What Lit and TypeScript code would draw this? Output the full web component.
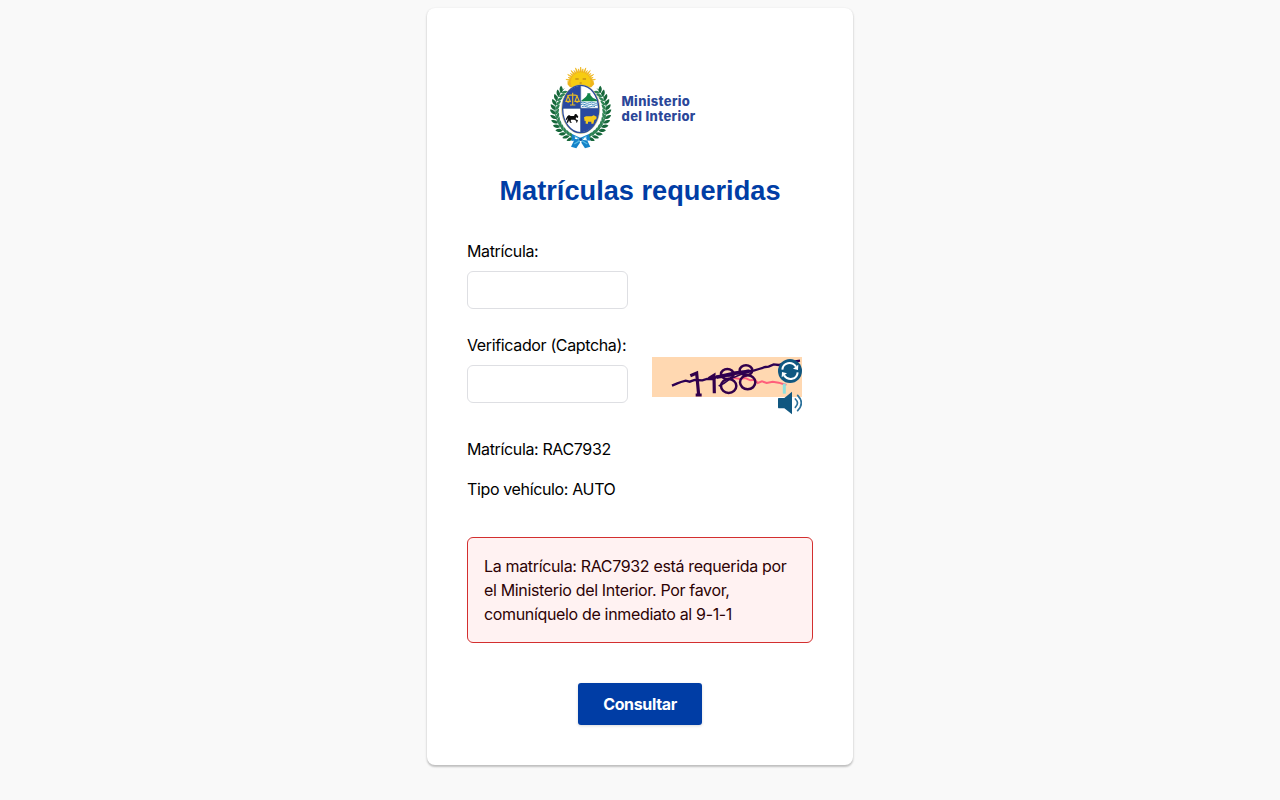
import { LitElement, html, svg, css } from "lit";
import { customElement } from "lit/decorators.js";

@customElement("ministry-crest")
class MinistryCrest extends LitElement {
  static styles = css`
    :host { display: block; width: 80px; height: 95px; }
    svg { display: block; }
  `;

  private side(flip: boolean) {
    const leaves = Array.from({ length: 13 }, (_, i) => {
      const deg = 48 + i * 9.4;
      const r = (deg * Math.PI) / 180;
      return { x: 122 - 76 * Math.sin(r), y: 153 - 84 * Math.cos(r), turn: 90 - deg };
    });
    return svg`<g transform=${flip ? "translate(244 0) scale(-1 1)" : ""}>
      <path d="M102 232C70 218 46 190 45 149C45 121 56 101 72 86" fill="none" stroke="#2d7d55" stroke-width="3"/>
      ${leaves.map((p) => svg`<g transform="translate(${p.x} ${p.y}) rotate(${p.turn})">
          <path d="M0 3C-11 2 -15 -6 -15 -13C-6 -12 1 -7 0 3" fill="#17683b"/>
          <path d="M0 3C9 2 12 -7 12 -14C4 -12 -1 -6 0 3" fill="#2e8354"/>
        </g>`)}
    </g>`;
  }

  render() {
    const rays = Array.from({ length: 19 }, (_, i) => {
      const a = 180 + i * 10;
      const r = (a * Math.PI) / 180;
      const s = ((a - 6) * Math.PI) / 180;
      const e = ((a + 6) * Math.PI) / 180;
      const len = i % 2 ? 45 : 40;
      return `M${122 + 27 * Math.cos(s)} ${66 + 27 * Math.sin(s)}L${122 + len * Math.cos(r)} ${66 + len * Math.sin(r)}L${122 + 27 * Math.cos(e)} ${66 + 27 * Math.sin(e)}Z`;
    }).join("");
    return html`<svg width="80" height="95" viewBox="0 0 240 285" role="img" aria-label="Escudo">
      <path d=${rays} fill="#efb51a" stroke="#efb51a" stroke-width="2"/>
      <path d="M82 72L92 52H152L163 72L154 82H90Z" fill="#efb51a"/>
      <ellipse cx="122" cy="66" rx="30" ry="29" fill="#f7cc10"/>
      <path d="M106 57h10M128 57h10M119 69h6" stroke="#ad7616" stroke-width="3"/>
      ${this.side(false)}${this.side(true)}
      <path d="M96 222L121 233L147 222L151 242L124 239L94 243ZM104 238L117 236L120 248L109 265L93 260ZM140 238L127 236L124 248L135 265L151 260Z" fill="#1583c9"/>
      <path d="M104 229L142 252M140 229L103 252" stroke="#54b8e4" stroke-width="4"/>
      <path d="M105 234L112 236M132 236L139 234" stroke="#fff" stroke-width="4"/>
      <circle cx="122" cy="238" r="5" fill="#19579e"/>
      <ellipse cx="122" cy="147" rx="57" ry="73" fill="#fff" stroke="#c8b04b" stroke-width="2"/>
      <clipPath id="oval"><ellipse cx="122" cy="147" rx="54" ry="70"/></clipPath>
      <g clip-path="url(#oval)">
        <path d="M65 70H122V145H65ZM122 145H180V220H122Z" fill="#2948a0"/>
        <path d="M122 145H180V70H122Z" fill="#fff"/>
        <path d="M122 124L129 118L138 110L142 104V100h9v5L159 114L168 118L174 124Z" fill="#128448"/>
        <path d="M122 128q7-4 13 0t13 0t13 0t15 0M122 134q7-4 13 0t13 0t13 0t15 0M126 140q7-4 13 0t13 0t13 0" fill="none" stroke="#448dc0" stroke-width="3"/>
      </g>
      <ellipse cx="122" cy="147" rx="54" ry="71" fill="none" stroke="#2c4d9c" stroke-width="4"/>
      <path d="M122 77V217M69 145H175" stroke="#1e478c" stroke-width="2"/>
      <path d="M98 98V134M82 108Q98 101 114 108M90 135H106M84 108L78 124H91ZM111 108L105 124H118Z" fill="none" stroke="#e4b926" stroke-width="3.5"/>
      <path d="M77 123H92Q85 133 77 123M104 123H119Q112 133 104 123" fill="#eabc20"/>
      <path d="M82 169L87 165L92 168H102L105 162L110 163L115 170L113 174L108 172L107 178L114 181L111 188L108 187L109 183L103 179H93L92 184L96 188H90L87 181L84 188H80L84 174L79 181L77 178Z" fill="#0b0c0d"/>
      <path d="M132 172L138 169H155L161 166L170 170L169 177L163 180L160 191H154V185H144V191H137V182L134 184Z" fill="#f5ca1a"/>
    </svg>`;
  }
}

@customElement("captcha-picture")
class CaptchaPicture extends LitElement {
  static styles = css`
    :host { display: block; width: 150px; height: 60px; }
    svg { display: block; }
  `;
  render() {
    return html`<svg width="150" height="60" viewBox="0 0 450 180" role="img" aria-label="Captcha">
      <path d="M0 0H450V120H0Z" fill="#ffd8b1"/>
      <g fill="none">
        <path d="M243 62L264 66L280 63L295 70L309 68L317 78L330 73L344 78L362 74L380 77L403 84" stroke="#ff5f7b" stroke-width="6"/>
        <path d="M397 80V110" stroke="#8ee0dd" stroke-width="9"/>
        <path d="M60 86L76 79L87 75L101 71L113 74L128 69L151 70L165 66L183 66L194 59L208 60L218 55L235 56L252 49L273 48L285 42L305 41L321 36L340 30L350 29L365 22L380 24L400 18L419 18L430 13L444 11" stroke="#2d0052" stroke-width="7"/>
        <path d="M193 61L251 48L292 43" stroke="#2d0052" stroke-width="11"/>
        <g stroke="#32004b" stroke-width="9.5">
          <path d="M115 56L134 48L140 114M131 114L149 114"/>
          <path d="M170 65L186 55L187 109"/>
          <g stroke-width="7.5">
            <ellipse cx="226" cy="51" rx="19" ry="15"/>
            <ellipse cx="230" cy="87" rx="23" ry="21"/>
            <ellipse cx="282" cy="40" rx="19" ry="15"/>
            <ellipse cx="287" cy="76" rx="23" ry="21"/>
          </g>
        </g>
        <path d="M200 87L216 79L233 66L250 59L270 51L296 43" stroke="#2d0052" stroke-width="5"/>
      </g>
      <circle cx="414" cy="42" r="36" fill="#105780"/>
      <g transform="translate(414 42)">
        <path d="M-23 -4C-21 -26 5 -31 18 -13M23 4C21 26 -5 31 -18 13" fill="none" stroke="#fff" stroke-width="6"/>
        <path d="M25 -19L24 -3L9 -7ZM-25 19L-24 3L-9 7Z" fill="#fff"/>
      </g>
      <path d="M380 123H397L420 104V172L397 154H380Q378 154 378 151V126Q378 123 380 123Z" fill="#105780"/>
      <path d="M430 126Q443 138 430 151M437 115Q459 138 437 161" fill="none" stroke="#2c719b" stroke-width="5" stroke-linecap="round"/>
    </svg>`;
  }
}

@customElement("app-root")
class AppRoot extends LitElement {
  static styles = css`
    :host { display: block; box-sizing: border-box; min-height: 800px; padding-top: 8px; background: #f9f9f9; color: #000; font: 16px/24px Inter, sans-serif; letter-spacing: -0.36px; }
    * { box-sizing: border-box; }
    .card { width: 426px; height: 757px; margin: 0 auto; padding: 52px 40px 40px; background: #fff; border-radius: 8px; box-shadow: 0 1px 3px rgba(0,0,0,.1), 0 1.5px 2px rgba(0,0,0,.18); }
    .logo { display: flex; height: 95px; padding-left: 73px; }
    .name { margin: 34px 0 0 1.5px; font: 800 13px/15px Inter, sans-serif; color: #2b4799; letter-spacing: 0.35px; white-space: nowrap; }
    .name span { display: block; }
    h1 { margin: 16px 0 0; height: 40px; text-align: center; font: 700 27.2px/40px "Liberation Sans", sans-serif; color: #003da5; letter-spacing: 0; }
    .field { width: 161px; margin-top: 28px; }
    .pair { display: flex; margin-top: 24px; }
    .pair .field { margin-top: 0; }
    label { display: block; white-space: nowrap; }
    input { display: block; width: 161px; height: 38px; margin: 8px 0 0; border: 1px solid #dedfe3; border-radius: 6px; background: #fff; outline: 0; }
    captcha-picture { margin: 24px 0 0 24px; }
    p { margin: 16px 0 0; white-space: nowrap; }
    .first { margin-top: 20px; }
    .alert { margin-top: 36px; height: 106px; padding: 16px; border: 1px solid #d32f2f; border-radius: 6px; background: #fff2f2; color: #2d0205; white-space: nowrap; letter-spacing: -0.34px; }
    .alert span { display: block; }
    button { display: block; width: 124px; height: 42px; margin: 40px auto 0; padding: 0; border: 0; border-radius: 3px; background: #003da5; color: #fff; font: 700 16px/24px Inter, sans-serif; letter-spacing: -0.35px; box-shadow: 0 1px 3px rgba(0,0,0,.15); }
  `;
  render() {
    return html`<main class="card">
      <div class="logo"><ministry-crest></ministry-crest><div class="name"><span>Ministerio</span><span>del Interior</span></div></div>
      <h1>Matrículas requeridas</h1>
      <div class="field"><label for="plate">Matrícula:</label><input id="plate"></div>
      <div class="pair">
        <div class="field"><label for="code">Verificador (Captcha):</label><input id="code"></div>
        <captcha-picture></captcha-picture>
      </div>
      <p class="first">Matrícula: RAC7932</p>
      <p>Tipo vehículo: AUTO</p>
      <div class="alert"><span>La matrícula: RAC7932 está requerida por</span><span>el Ministerio del Interior. Por favor,</span><span>comuníquelo de inmediato al 9-1-1</span></div>
      <button>Consultar</button>
    </main>`;
  }
}
